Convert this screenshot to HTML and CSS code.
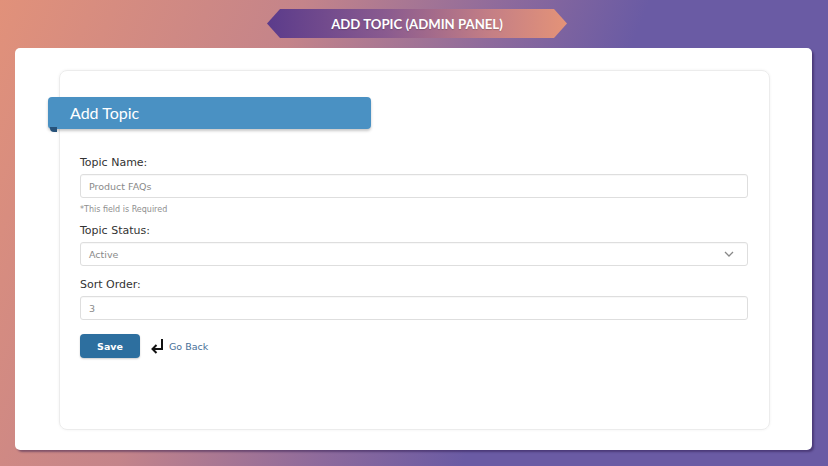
FILE: index.html
```html
<!DOCTYPE html>
<html>
<head>
<meta charset="utf-8">
<link rel="stylesheet" href="styles.css">
</head>
<body>
<div class="page">
  <header class="top">
    <div class="banner">ADD TOPIC (ADMIN PANEL)</div>
  </header>
  <main class="card">
    <section class="panel">
      <h2 class="ribbon">Add Topic</h2>
      <form class="form">
        <div class="group">
          <label class="label">Topic Name:</label>
          <div class="field"><span class="ph">Product FAQs</span></div>
          <div class="help">*This field is Required</div>
        </div>
        <div class="group">
          <label class="label">Topic Status:</label>
          <div class="field select"><span class="ph">Active</span>
            <svg class="chev" width="10" height="6" viewBox="0 0 10 6"><polyline points="1,1 5,5 9,1" fill="none" stroke="#888" stroke-width="1.3"/></svg>
          </div>
        </div>
        <div class="group">
          <label class="label">Sort Order:</label>
          <div class="field"><span class="ph">3</span></div>
        </div>
        <div class="actions">
          <button type="button" class="save">Save</button>
          <a class="back" href="#">
            <svg width="14" height="16" viewBox="0 0 14 16"><path d="M12 1 V11 H3" fill="none" stroke="#111" stroke-width="2"/><polyline points="6.5,7 2.5,11 6.5,15" fill="none" stroke="#111" stroke-width="2"/></svg>
            <span>Go Back</span>
          </a>
        </div>
      </form>
    </section>
  </main>
</div>
</body>
</html>
```
FILE: styles.css
```css
* { box-sizing: border-box; }
html, body { margin: 0; padding: 0; }
body {
  width: 828px;
  height: 466px;
  overflow: hidden;
  background: linear-gradient(112deg, #e1917a 0%, #c4848a 30%, #8d6a9c 50%, #6a5ba4 64%, #6a5ba4 100%);
  font-family: "DejaVu Sans", Verdana, sans-serif;
}
.page {
  display: flex;
  flex-direction: column;
  height: 466px;
}
.top {
  height: 48px;
  display: flex;
  justify-content: center;
  padding-top: 9px;
  padding-left: 6px;
}
.banner {
  width: 300px;
  height: 29px;
  display: flex;
  align-items: center;
  justify-content: center;
  color: #fff;
  font-family: Lato, "Open Sans", sans-serif;
  font-weight: 700;
  font-size: 13.2px;
  background: linear-gradient(90deg, #5b3b8b 0%, #8a5b8f 40%, #c57f85 75%, #e49378 100%);
  clip-path: polygon(0 50%, 13px 0, calc(100% - 13px) 0, 100% 50%, calc(100% - 13px) 100%, 13px 100%);
  text-shadow: 0 1px 1px rgba(0,0,0,0.2);
}
.card {
  margin: 0 16px 16px 15px;
  flex: 1;
  background: #fff;
  border-radius: 5px;
  box-shadow: 2px 2px 2px rgba(40,20,70,0.45);
  padding: 22px 42px 20px 44px;
  display: flex;
}
.panel {
  flex: 1;
  border: 1px solid #ececec;
  border-radius: 8px;
  box-shadow: 0 0 3px rgba(0,0,0,0.06);
  padding: 0 21px 0 20px;
}
.ribbon {
  position: relative;
  margin: 26px 0 0 -32px;
  width: 323px;
  height: 32px;
  background: #4a91c3;
  color: #fff;
  border-radius: 4px;
  font-family: Lato, "Open Sans", sans-serif;
  font-weight: 400;
  font-size: 16px;
  line-height: 32px;
  padding-left: 22px;
  box-shadow: 0 2px 3px rgba(0,0,0,0.22);
}
.ribbon::after {
  content: "";
  position: absolute;
  left: 2px;
  bottom: -3px;
  width: 7px;
  height: 5px;
  background: #27527a;
  border-radius: 0 0 0 4px;
}
.form {
  padding-top: 27px;
}
.group {
  margin-bottom: 12px;
}
.label {
  display: block;
  font-size: 11px;
  line-height: 14px;
  color: #333;
  margin-bottom: 4px;
}
.field {
  height: 24px;
  border: 1px solid #dedede;
  border-radius: 3px;
  padding-left: 8px;
  display: flex;
  align-items: center;
  box-shadow: inset 0 1px 1px rgba(0,0,0,0.03);
}
.select {
  justify-content: space-between;
  padding-right: 13px;
}
.ph {
  font-size: 9.5px;
  color: #8a8a8a;
}
.help {
  margin-top: 6px;
  font-size: 8px;
  line-height: 12px;
  color: #8f8f8f;
  margin-bottom: -4px;
}
.actions {
  display: flex;
  align-items: center;
  gap: 10px;
  margin-top: 14px;
}
.save {
  width: 60px;
  height: 24px;
  border: none;
  border-radius: 4px;
  background: #2d6f9f;
  color: #fff;
  font-family: "DejaVu Sans", Verdana, sans-serif;
  font-weight: 700;
  font-size: 9.5px;
  box-shadow: 0 1px 2px rgba(0,0,0,0.2);
}
.back {
  display: flex;
  align-items: center;
  gap: 5px;
  text-decoration: none;
  color: #476f98;
  font-size: 9.5px;
}
```
